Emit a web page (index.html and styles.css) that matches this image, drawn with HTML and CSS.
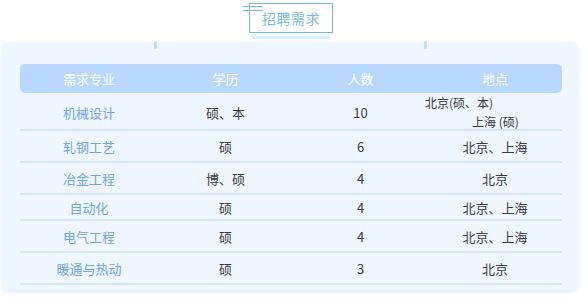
FILE: index.html
```html
<!DOCTYPE html>
<html lang="zh">
<head>
<meta charset="utf-8">
<link rel="stylesheet" href="styles.css">
</head>
<body>
<div class="title-wrap">
  <div class="title-box">
    <span class="deco deco-1"></span>
    <span class="deco deco-2"></span>
    <span class="title-text">招聘需求</span>
  </div>
  <div class="title-bar"></div>
</div>
<div class="panel">
  <span class="pin pin-1"></span>
  <span class="pin pin-2"></span>
  <div class="table">
    <div class="row head">
      <div class="cell">需求专业</div>
      <div class="cell">学历</div>
      <div class="cell">人数</div>
      <div class="cell">地点</div>
    </div>
    <div class="row r1">
      <div class="cell major">机械设计</div>
      <div class="cell">硕、本</div>
      <div class="cell">10</div>
      <div class="cell place">
        <span class="l1">北京(硕、本)</span>
        <span class="l2">上海 (硕)</span>
      </div>
    </div>
    <div class="row">
      <div class="cell major">轧钢工艺</div>
      <div class="cell">硕</div>
      <div class="cell">6</div>
      <div class="cell">北京、上海</div>
    </div>
    <div class="row">
      <div class="cell major">冶金工程</div>
      <div class="cell">博、硕</div>
      <div class="cell">4</div>
      <div class="cell">北京</div>
    </div>
    <div class="row short">
      <div class="cell major">自动化</div>
      <div class="cell">硕</div>
      <div class="cell">4</div>
      <div class="cell">北京、上海</div>
    </div>
    <div class="row">
      <div class="cell major">电气工程</div>
      <div class="cell">硕</div>
      <div class="cell">4</div>
      <div class="cell">北京、上海</div>
    </div>
    <div class="row">
      <div class="cell major">暖通与热动</div>
      <div class="cell">硕</div>
      <div class="cell">3</div>
      <div class="cell">北京</div>
    </div>
  </div>
</div>
</body>
</html>
```

FILE: styles.css
```css
html, body {
  margin: 0;
  padding: 0;
  background: #ffffff;
}
body {
  width: 586px;
  height: 298px;
  overflow: hidden;
  font-family: "Noto Sans CJK SC", "Noto Sans", sans-serif;
}
.title-wrap {
  display: flex;
  flex-direction: column;
  align-items: flex-start;
  padding: 3px 0 0 249px;
  height: 40px;
  box-sizing: border-box;
}
.title-box {
  position: relative;
  width: 84px;
  height: 30px;
  box-sizing: border-box;
  border: 1px solid #6cc0de;
  display: flex;
  align-items: center;
  justify-content: center;
}
.title-text {
  font-size: 14px;
  color: #72bce0;
  letter-spacing: 0.5px;
  line-height: 1;
}
.deco {
  position: absolute;
  left: -7px;
  width: 20px;
  height: 1px;
  background: #6cc0de;
}
.deco-1 { top: 2px; }
.deco-2 { top: 6px; }
.title-bar {
  margin: 3px 0 0 3px;
  width: 78px;
  height: 3px;
  background: #d9eff8;
}
.panel {
  position: relative;
  margin: 2px 0 0 2px;
  width: 576px;
  height: 248px;
  box-sizing: border-box;
  padding: 22px 16px 0 18px;
  background: #eef6ff;
  border-radius: 6px;
  box-shadow: 0 2px 5px rgba(170, 200, 240, 0.35);
}
.pin {
  position: absolute;
  top: -1px;
  width: 3px;
  height: 8px;
  border-radius: 2px;
  background: #c4dbf8;
}
.pin-1 { left: 152px; }
.pin-2 { left: 422px; }
.table {
  width: 542px;
}
.row {
  display: grid;
  grid-template-columns: 138px 135px 135px 134px;
  height: 32px;
  box-sizing: border-box;
  border-bottom: 2px solid #d3e5fc;
  font-size: 13px;
  color: #3a3a3a;
}
.row.head {
  height: 29px;
  background: #b8d8fd;
  border-radius: 5px;
  border-bottom: none;
  color: #ffffff;
}
.row.r1 { height: 38px; }
.row.short { height: 26px; }
.cell {
  display: flex;
  align-items: center;
  justify-content: center;
}
.major {
  color: #6fa4ee;
}
.place {
  flex-direction: column;
  align-items: flex-start;
  justify-content: center;
  font-size: 12px;
  line-height: 19px;
  padding-left: 0;
  margin-left: -3px;
}
.place .l2 {
  margin-left: 47px;
}
```
